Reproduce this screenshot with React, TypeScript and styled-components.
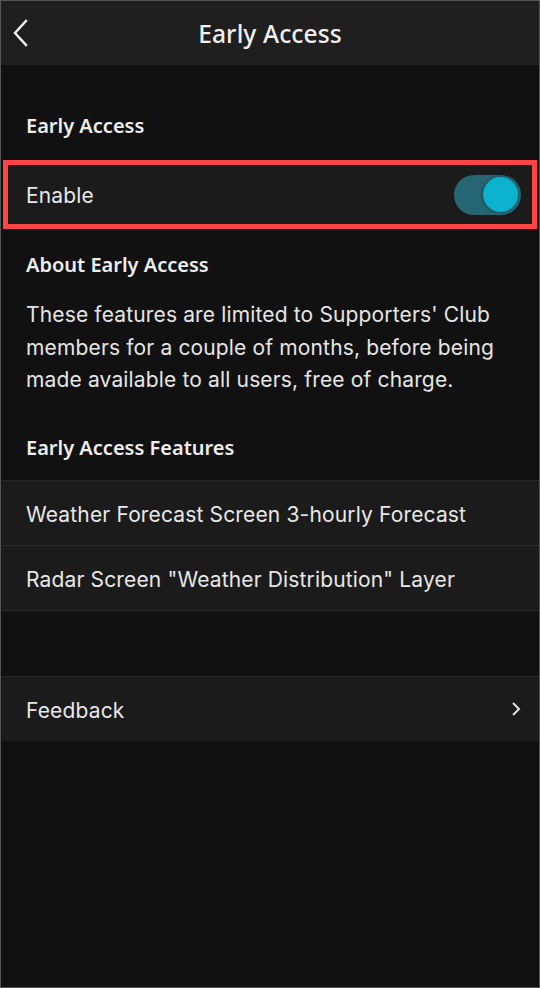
import React, { ReactElement, useState } from 'react';
import styled, { createGlobalStyle } from 'styled-components';

const GlobalStyle = createGlobalStyle`
  html, body {
    margin: 0;
    padding: 0;
    background: #111111;
  }
  * {
    box-sizing: border-box;
  }
`;

const Screen = styled.div`
  width: 540px;
  height: 988px;
  background: #111111;
  border: 1px solid #555555;
  display: flex;
  flex-direction: column;
  overflow: hidden;
  font-family: Inter, 'Noto Sans', sans-serif;
  color: #ececec;
`;

const Header = styled.header`
  height: 64px;
  flex-shrink: 0;
  background: #1f1f1f;
  display: grid;
  grid-template-columns: 60px 1fr 60px;
  align-items: center;
`;

const BackButton = styled.button`
  background: none;
  border: none;
  padding: 0 0 0 11px;
  height: 100%;
  display: flex;
  align-items: center;
  color: #f2f2f2;
  cursor: pointer;
`;

const HeaderTitle = styled.h1`
  margin: 0;
  text-align: center;
  font-family: 'Noto Sans', sans-serif;
  font-weight: 500;
  font-size: 24.6px;
  letter-spacing: 0.1px;
  color: #f0f0f0;
`;

const SectionTitle = styled.h2<{ $top: number; $bottom: number }>`
  margin: 0;
  padding: ${(p) => p.$top}px 27px ${(p) => p.$bottom}px 25px;
  font-family: 'Noto Sans', sans-serif;
  font-weight: 600;
  font-size: 20px;
  line-height: 24px;
  color: #ededed;
`;

const HighlightBox = styled.div`
  margin: 0 2px;
  border: 5px solid #ff4448;
`;

const Row = styled.div<{ $divider?: boolean }>`
  height: ${(p) => (p.$divider ? 65 : 64)}px;
  padding: 4px 27px 0 25px;
  background: #1b1b1b;
  display: flex;
  align-items: center;
  justify-content: space-between;
  font-size: 21px;
  letter-spacing: 0.15px;
  color: #e8e8e8;
  border-bottom: ${(p) => (p.$divider ? '1px solid #2a2a2a' : 'none')};
`;

const HighlightRow = styled(Row)`
  height: 59px;
  padding: 0 11px 0 18px;
`;

const RowLabel = styled.span`
  padding-top: 2px;
`;

const List = styled.div<{ $top?: number }>`
  margin-top: ${(p) => p.$top || 0}px;
  border-top: 1px solid #262626;
`;

const Paragraph = styled.p`
  margin: 0;
  padding: 0 20px 0 25px;
  font-size: 21px;
  letter-spacing: 0.15px;
  line-height: 32.5px;
  color: #e6e6e6;
`;

const Track = styled.button<{ $on: boolean }>`
  width: 67px;
  height: 40px;
  border-radius: 20px;
  border: none;
  padding: 3px;
  background: ${(p) => (p.$on ? '#266673' : '#444')};
  display: flex;
  justify-content: ${(p) => (p.$on ? 'flex-end' : 'flex-start')};
  align-items: center;
  cursor: pointer;
`;

const Knob = styled.span<{ $on: boolean }>`
  width: 35px;
  height: 35px;
  border-radius: 50%;
  background: ${(p) => (p.$on ? '#0bb1cd' : '#bbb')};
  box-shadow: -1px 0 3px rgba(0, 0, 0, 0.35);
`;

const Chevron = styled.span`
  display: flex;
  color: #e0e0e0;
  margin: -4px -10px 0 0;
`;

const features = [
  'Weather Forecast Screen 3-hourly Forecast',
  'Radar Screen "Weather Distribution" Layer',
];

function App(): ReactElement {
  const [enabled, setEnabled] = useState(true);

  return (
    <Screen>
      <GlobalStyle />
      <Header>
        <BackButton aria-label="Back">
          <svg width="18" height="28" viewBox="0 0 18 28" fill="none">
            <path d="M14 2 L3 14 L14 26" stroke="currentColor" strokeWidth="2.4" strokeLinecap="square" />
          </svg>
        </BackButton>
        <HeaderTitle>Early Access</HeaderTitle>
        <span />
      </Header>

      <SectionTitle $top={49} $bottom={22}>Early Access</SectionTitle>
      <HighlightBox>
        <HighlightRow>
          <RowLabel>Enable</RowLabel>
          <Track $on={enabled} onClick={() => setEnabled(!enabled)} aria-label="Enable">
            <Knob $on={enabled} />
          </Track>
        </HighlightRow>
      </HighlightBox>

      <SectionTitle $top={24} $bottom={22}>About Early Access</SectionTitle>
      <Paragraph>
        These features are limited to Supporters' Club members for a couple of months, before being made available to all users, free of charge.
      </Paragraph>

      <SectionTitle $top={39} $bottom={20}>Early Access Features</SectionTitle>
      <List>
        {features.map((x) => (
          <Row $divider key={x}>{x}</Row>
        ))}
      </List>

      <List $top={65}>
        <Row>
          Feedback
          <Chevron>
            <svg width="12" height="18" viewBox="0 0 12 18" fill="none">
              <path d="M3 3 L9 9 L3 15" stroke="currentColor" strokeWidth="2" />
            </svg>
          </Chevron>
        </Row>
      </List>
    </Screen>
  );
}

export default App;
